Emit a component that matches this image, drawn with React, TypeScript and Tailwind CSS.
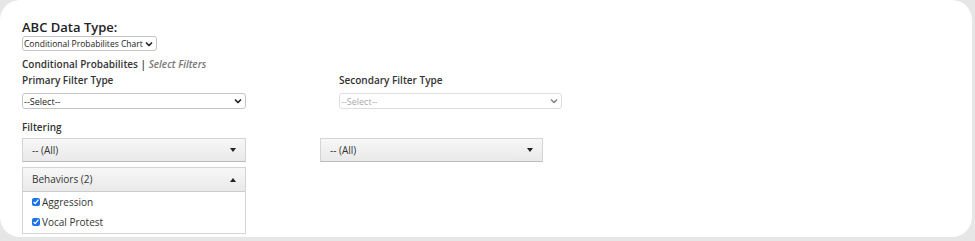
import { useState } from "react";

const font = { fontFamily: '"Open Sans", "Noto Sans", sans-serif' };

const Caret = ({ up }: { up?: boolean }) => (
  <svg width="6" height="4" viewBox="0 0 6 4" className="mr-[1px]">
    {up ? <path d="M0 4 L3 0 L6 4 Z" fill="#222" /> : <path d="M0 0 L3 4 L6 0 Z" fill="#222" />}
  </svg>
);

const Select = ({
  label,
  width,
  height,
  text = "text-[9px]",
  disabled,
}: {
  label: string;
  width: string;
  height: string;
  text?: string;
  disabled?: boolean;
}) => (
  <div className={`relative ${width}`}>
    <select
      disabled={disabled}
      className={`block w-full appearance-none rounded-[3px] border bg-white pl-[1px] pr-[13px] leading-[13px] ${text} ${height} ${
        disabled ? "border-[#ddd] text-[#aaa]" : "border-[#c4c4c4] text-[#222]"
      }`}
    >
      <option>{label}</option>
    </select>
    <svg
      width="8"
      height="5"
      viewBox="0 0 8 5"
      className="pointer-events-none absolute right-[4px] top-1/2 -translate-y-1/2"
    >
      <path d="M1 1 L4 4 L7 1" fill="none" stroke={disabled ? "#888" : "#222"} strokeWidth="1.6" />
    </svg>
  </div>
);

const App = () => {
  const [behaviors, setBehaviors] = useState({ Aggression: true, "Vocal Protest": true });

  return (
    <div className="h-[241px] w-[975px] overflow-hidden bg-[#e6e6e6] pr-[3px] pb-[4px]" style={font}>
      <div className="h-full w-full rounded-[20px] bg-white pl-[22px] pt-[19px] text-[#333]">
        <div className="text-[13px] font-semibold leading-[16px] text-[#222]">ABC Data Type:</div>
        <div className="mt-[1px]">
          <Select label="Conditional Probabilites Chart" width="w-fit" height="h-[15px]" text="text-[8.5px]" />
        </div>

        <div className="mt-[6px] text-[10px] font-semibold leading-[14px] text-[#333]">
          Conditional Probabilites | <span className="italic text-[#777]">Select Filters</span>
        </div>

        <div className="mt-[2px] flex gap-[93px]">
          <div>
            <div className="text-[10px] font-semibold leading-[14px] text-[#333]">Primary Filter Type</div>
            <div className="mt-[6px]">
              <Select label="--Select--" width="w-[224px]" height="h-[16px]" />
            </div>
          </div>
          <div>
            <div className="text-[10px] font-semibold leading-[14px] text-[#333]">Secondary Filter Type</div>
            <div className="mt-[6px]">
              <Select label="--Select--" width="w-[223px]" height="h-[16px]" disabled />
            </div>
          </div>
        </div>

        <div className="mt-[11px] text-[10px] font-semibold leading-[14px] text-[#333]">Filtering</div>

        <div className="mt-[4px] flex items-start gap-[74px]">
          <div className="w-[224px]">
            <button className="flex h-[24px] w-full items-center justify-between border border-[#d4d4d4] border-b-[#bbb] bg-gradient-to-b from-[#f7f7f7] to-[#e9e9e9] pl-[9px] pr-[8px] text-[10px] text-[#333]">
              <span>-- (All)</span>
              <Caret />
            </button>
            <div className="mt-[5px] border border-[#d4d4d4]">
              <button className="flex h-[24px] w-full items-center justify-between border-b border-[#ccc] bg-gradient-to-b from-[#f7f7f7] to-[#e9e9e9] pl-[9px] pr-[8px] text-[10px] text-[#333]">
                <span>Behaviors (2)</span>
                <Caret up />
              </button>
              <div className="bg-white pb-[1px]">
                {Object.entries(behaviors).map(([name, checked]) => (
                  <label key={name} className="flex h-[20px] items-center pl-[9px] text-[10px] text-[#333]">
                    <input
                      type="checkbox"
                      checked={checked}
                      onChange={() => setBehaviors({ ...behaviors, [name]: !checked })}
                      className="m-0 mr-[2px] h-[8px] w-[8px] accent-[#1a73e8]"
                    />
                    {name}
                  </label>
                ))}
              </div>
            </div>
          </div>
          <button className="flex h-[24px] w-[223px] items-center justify-between border border-[#d4d4d4] border-b-[#bbb] bg-gradient-to-b from-[#f7f7f7] to-[#e9e9e9] pl-[9px] pr-[8px] text-[10px] text-[#333]">
            <span>-- (All)</span>
            <Caret />
          </button>
        </div>
      </div>
    </div>
  );
};

export default App;
